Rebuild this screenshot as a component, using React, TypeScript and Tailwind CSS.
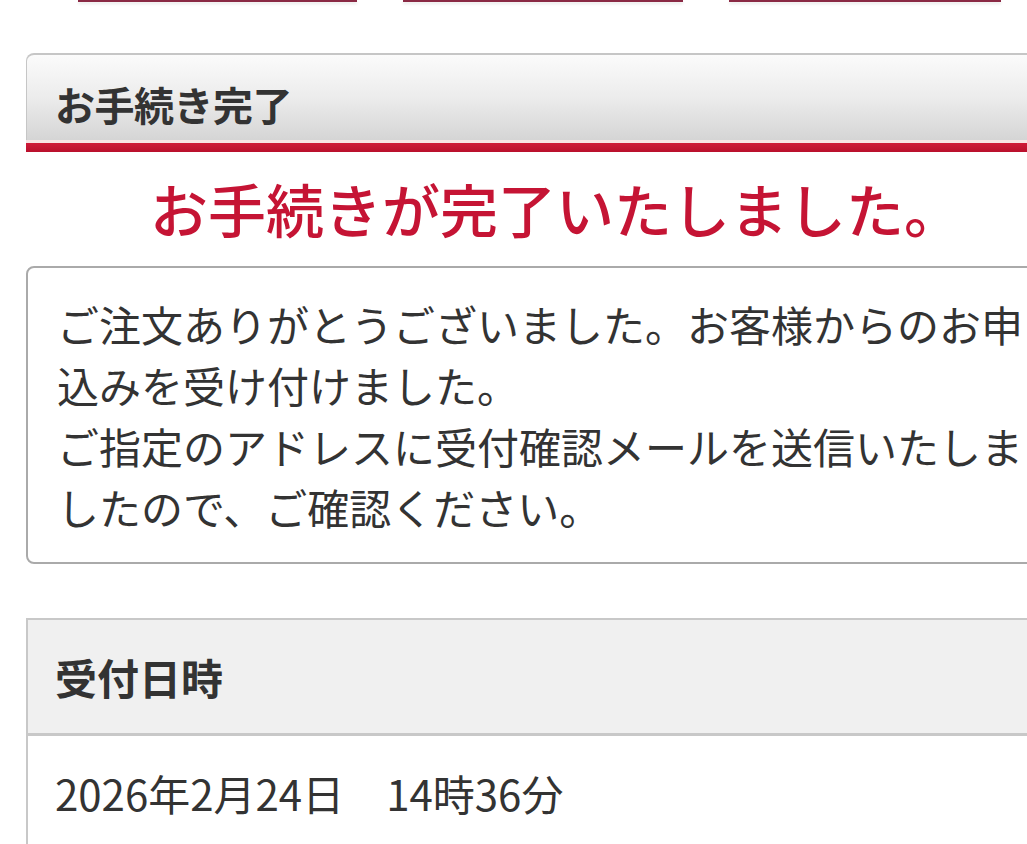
export default function App() {
  const font = { fontFamily: '"Noto Sans CJK JP", "Noto Sans", sans-serif' };
  return (
    <div className="w-[1027px] h-[844px] overflow-hidden bg-white text-[#333333]" style={font}>
      <div className="ml-[26px] w-[1030px]">
        {/* bottoms of the tab buttons above */}
        <div className="flex gap-[46px] pl-[52px]">
          <div className="h-[2px] w-[279px] bg-[#8a2944] shadow-[0_2px_3px_rgba(0,0,0,0.1)]" />
          <div className="h-[2px] w-[280px] bg-[#8a2944] shadow-[0_2px_3px_rgba(0,0,0,0.1)]" />
          <div className="h-[2px] w-[272px] bg-[#8a2944] shadow-[0_2px_3px_rgba(0,0,0,0.1)]" />
        </div>

        {/* section heading */}
        <div className="mt-[51px]">
          <div className="flex h-[87px] items-center rounded-tl-[8px] border-t-2 border-l border-[#c6c6c6] bg-gradient-to-b from-[#fbfbfb] via-[#ececec] to-[#d5d5d5] pl-[28px] pt-[12px]">
            <h2 className="text-[40px] font-bold leading-none tracking-[-0.5px] text-[#333333]">お手続き完了</h2>
          </div>
          <div className="h-[3px] bg-[#f7e4e4]" />
          <div className="h-[9px] bg-gradient-to-b from-[#cf1a38] to-[#b90f2c]" />
        </div>

        <p className="mt-[22px] pl-[30px] text-center text-[58px] font-medium leading-[68px] text-[#c51434]">
          お手続きが完了いたしました。
        </p>

        <div className="mt-[24px] rounded-[8px] border-2 border-[#aaaaaa] pl-[29px] pr-[20px] pt-[25px] pb-[25px]">
          <p className="text-[42px] leading-[61px] text-[#333333]">
            ご注文ありがとうございました。お客様からのお申込みを受け付けました。
            <br />
            ご指定のアドレスに受付確認メールを送信いたしましたので、ご確認ください。
          </p>
        </div>

        <div className="mt-[54px] border-t-2 border-l-2 border-[#c8c8c8]">
          <div className="flex h-[116px] items-center border-b-[3px] border-[#c8c8c8] bg-[#f0f0f0] pl-[27px]">
            <h3 className="text-[42px] font-bold leading-none">受付日時</h3>
          </div>
          <div className="h-[200px] pl-[27px] pt-[26px]">
            <p className="text-[42px] leading-[62px]">2026年2月24日　14時36分</p>
          </div>
        </div>
      </div>
    </div>
  );
}
